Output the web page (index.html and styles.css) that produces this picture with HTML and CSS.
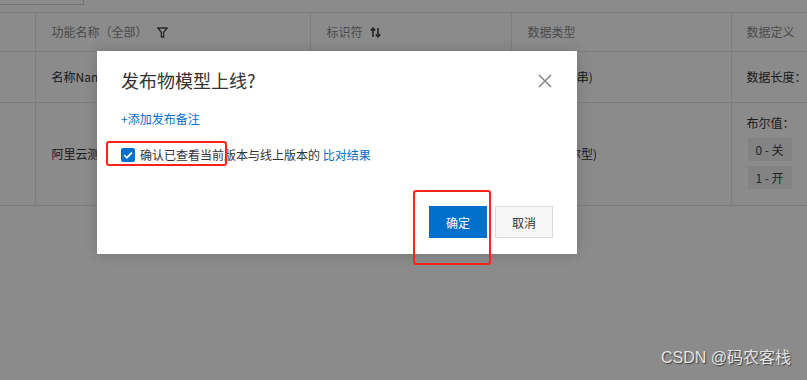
FILE: index.html
```html
<!DOCTYPE html>
<html lang="zh-CN">
<head>
<meta charset="utf-8">
<title>发布物模型上线</title>
<link rel="stylesheet" href="styles.css">
</head>
<body>
<div class="page">
  <div class="topbar"><div class="search-box"></div></div>
  <table class="grid">
    <colgroup>
      <col class="c0"><col class="c1"><col class="c2"><col class="c3"><col class="c4">
    </colgroup>
    <thead>
      <tr class="head-row">
        <th></th>
        <th>功能名称（全部）<svg class="filter" width="11" height="11" viewBox="0 0 11 11"><path d="M0.8 1h9.4L6.6 5.4v4.6H4.4V5.4z" fill="none" stroke="#444" stroke-width="1.3" stroke-linejoin="round"/></svg></th>
        <th>标识符<svg class="sort" width="11" height="11" viewBox="0 0 11 11"><path d="M3 10V1.2M0.8 3.6L3 1.2 5.2 3.6" fill="none" stroke="#444" stroke-width="1.6"/><path d="M8 1v8.8M5.8 7.4L8 9.8 10.2 7.4" fill="none" stroke="#444" stroke-width="1.6"/></svg></th>
        <th>数据类型</th>
        <th>数据定义</th>
      </tr>
    </thead>
    <tbody>
      <tr class="row1">
        <td></td>
        <td>名称Name</td>
        <td>name</td>
        <td>text(字符串)</td>
        <td>数据长度：</td>
      </tr>
      <tr class="row2">
        <td></td>
        <td class="mid">阿里云测试功能</td>
        <td class="mid">test</td>
        <td class="mid">bool(布尔型)</td>
        <td class="def">
          <div class="def-label">布尔值：</div>
          <div class="tag">0 - 关</div>
          <div class="tag">1 - 开</div>
        </td>
      </tr>
    </tbody>
  </table>
</div>

<div class="mask"></div>

<div class="dialog">
  <div class="dialog-head">
    <div class="dialog-title">发布物模型上线?</div>
    <svg class="close" width="14" height="14" viewBox="0 0 14 14"><path d="M1 1L13 13M13 1L1 13" stroke="#888" stroke-width="1.6"/></svg>
  </div>
  <a class="add-note">+添加发布备注</a>
  <label class="confirm">
    <span class="check"><svg width="14" height="14" viewBox="0 0 14 14"><path d="M3.2 7.2L5.9 9.8 10.9 4.6" fill="none" stroke="#fff" stroke-width="1.8"/></svg></span>
    <span class="confirm-text">确认已查看当前版本与线上版本的 <a class="link">比对结果</a></span>
  </label>
  <div class="dialog-foot">
    <button class="btn btn-primary">确定</button>
    <button class="btn btn-default">取消</button>
  </div>
</div>

<div class="mark mark-check"></div>
<div class="mark mark-ok"></div>

<div class="watermark">CSDN @码农客栈</div>
</body>
</html>
```
FILE: styles.css
```css
* { box-sizing: border-box; }
html, body { margin: 0; padding: 0; }
body {
  width: 807px;
  height: 380px;
  overflow: hidden;
  background: #fff;
  font-family: "Noto Sans CJK SC", "Noto Sans", sans-serif;
  font-size: 12px;
  color: #333;
  position: relative;
}
.page { width: 807px; }
.topbar {
  height: 13px;
  border-bottom: 1px solid #e6e6e6;
}
.search-box {
  width: 84px;
  height: 5px;
  border-right: 1px solid #d4d4d4;
  border-bottom: 1px solid #d4d4d4;
}
.grid {
  border-collapse: collapse;
  table-layout: fixed;
  width: 807px;
}
.c0 { width: 35px; }
.c1 { width: 275px; }
.c2 { width: 201px; }
.c3 { width: 220px; }
.c4 { width: 76px; }
.grid th, .grid td {
  border-left: 1px solid #e6e6e6;
  border-bottom: 1px solid #e6e6e6;
  padding: 0 0 0 16px;
  text-align: left;
  white-space: nowrap;
  overflow: hidden;
}
.grid th:first-child, .grid td:first-child { border-left: none; }
.grid th:last-child, .grid td:last-child { padding-left: 15px; padding-right: 0; }
.head-row th {
  height: 38px;
  font-weight: normal;
  color: #8a8a8a;
  vertical-align: middle;
}
.filter { margin-left: 9px; vertical-align: -1px; }
.sort { margin-left: 7px; vertical-align: -1px; }
.row1 td { height: 51px; vertical-align: middle; color: #333; }
.row2 td { height: 103px; vertical-align: middle; color: #333; }
.row2 td.def { vertical-align: top; padding-top: 12px; }
.def-label { line-height: 16px; margin-bottom: 7px; }
.tag {
  width: 44px;
  height: 23px;
  line-height: 23px;
  text-align: center;
  background: #f0f0f0;
  margin: 0 0 5px 1px;
  color: #444;
}

.mask {
  position: absolute;
  inset: 0;
  background: rgba(0, 0, 0, 0.455);
}

.dialog {
  position: absolute;
  left: 97px;
  top: 51px;
  width: 480px;
  height: 203px;
  background: #fff;
  box-shadow: 0 0 12px rgba(0, 0, 0, 0.18);
  padding: 17px 24px 16px 24px;
  display: flex;
  flex-direction: column;
}
.dialog-head {
  display: flex;
  align-items: center;
  justify-content: space-between;
  height: 24px;
}
.dialog-title {
  font-size: 18px;
  line-height: 24px;
  color: #333;
}
.close { display: block; margin-top: 1px; margin-right: 1px; }
.add-note {
  margin-top: 18px;
  line-height: 18px;
  color: #0070cc;
  font-size: 12px;
}
.confirm {
  margin-top: 18px;
  display: flex;
  align-items: center;
  height: 18px;
}
.check {
  width: 14px;
  height: 14px;
  background: #0070cc;
  border-radius: 2px;
  display: flex;
  margin-right: 5px;
}
.check svg { display: block; }
.confirm-text { line-height: 18px; color: #333; white-space: nowrap; }
.link { color: #0070cc; }
.dialog-foot {
  margin-top: auto;
  display: flex;
  justify-content: flex-end;
  gap: 8px;
}
.btn {
  width: 58px;
  height: 32px;
  font-family: inherit;
  font-size: 12px;
  border-radius: 0;
  cursor: pointer;
}
.btn-primary {
  background: #0070cc;
  border: 1px solid #0070cc;
  color: #fff;
}
.btn-default {
  background: #f7f7f7;
  border: 1px solid #dcdcdc;
  color: #333;
}

.mark {
  position: absolute;
  border: 2px solid #ff2418;
  border-radius: 3px;
}
.mark-check { left: 106px; top: 141px; width: 121px; height: 25px; }
.mark-ok { left: 413px; top: 190px; width: 78px; height: 75px; }

.watermark {
  position: absolute;
  right: 16px;
  top: 348px;
  font-family: "Liberation Sans", "Noto Sans CJK SC", sans-serif;
  font-size: 16px;
  line-height: 20px;
  color: #e4e4e4;
  text-shadow: 1px 1px 1px rgba(0, 0, 0, 0.55);
}
```
